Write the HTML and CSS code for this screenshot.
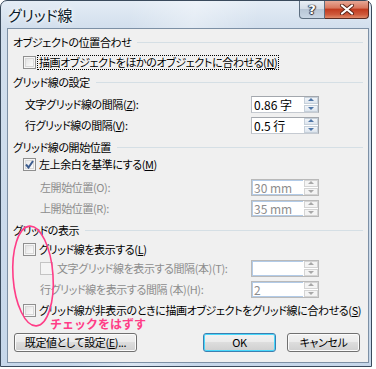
FILE: index.html
```html
<!DOCTYPE html>
<html lang="ja">
<head>
<meta charset="utf-8">
<link rel="stylesheet" href="styles.css">
</head>
<body>
<div class="window">
  <div class="titlebar">
    <span class="title">グリッド線</span>
    <div class="caption">
      <div class="cap-help">?</div>
      <div class="cap-close">
        <svg width="16" height="11" viewBox="0 0 16 11"><path d="M3 1.5 L13 9.5 M13 1.5 L3 9.5" stroke="#5a2418" stroke-width="4" stroke-linecap="round"/><path d="M3 1.5 L13 9.5 M13 1.5 L3 9.5" stroke="#fff" stroke-width="2.2" stroke-linecap="round"/></svg>
      </div>
    </div>
  </div>
  <div class="client">
    <div class="group-title g1"><span>オブジェクトの位置合わせ</span></div>
    <div class="row chk-row m3">
      <span class="chk"></span><span class="focus">描画オブジェクトをほかのオブジェクトに合わせる(<u>N</u>)</span>
    </div>

    <div class="group-title m3"><span>グリッド線の設定</span></div>
    <div class="row field m5">
      <span class="lbl">文字グリッド線の間隔(<u>Z</u>):</span>
      <div class="spin"><span class="val">0.86 字</span><span class="arrows"><i class="up"></i><i class="dn"></i></span></div>
    </div>
    <div class="row field m3">
      <span class="lbl">行グリッド線の間隔(<u>V</u>):</span>
      <div class="spin"><span class="val">0.5 行</span><span class="arrows"><i class="up"></i><i class="dn"></i></span></div>
    </div>

    <div class="group-title m5"><span>グリッド線の開始位置</span></div>
    <div class="row chk-row">
      <span class="chk checked"><svg width="9" height="9" viewBox="0 0 9 9"><path d="M1 4.5 L3.5 7.5 L8 1" fill="none" stroke="#3d5d8f" stroke-width="2"/></svg></span><span class="txt">左上余白を基準にする(<u>M</u>)</span>
    </div>
    <div class="row field m5 dis">
      <span class="lbl ind">左開始位置(O):</span>
      <div class="spin off"><span class="val">30 mm</span><span class="arrows"><i class="up"></i><i class="dn"></i></span></div>
    </div>
    <div class="row field m3 dis">
      <span class="lbl ind">上開始位置(R):</span>
      <div class="spin off"><span class="val">35 mm</span><span class="arrows"><i class="up"></i><i class="dn"></i></span></div>
    </div>

    <div class="group-title m5"><span>グリッドの表示</span></div>
    <div class="row chk-row m2">
      <span class="chk"></span><span class="txt">グリッド線を表示する(<u>L</u>)</span>
    </div>
    <div class="row field m1 dis">
      <span class="lbl sub"><span class="chk off"></span><span class="txt">文字グリッド線を表示する間隔(本)(T):</span></span>
      <div class="spin off"><span class="val"></span><span class="arrows"><i class="up"></i><i class="dn"></i></span></div>
    </div>
    <div class="row field m3 dis">
      <span class="lbl ind">行グリッド線を表示する間隔 (本)(H):</span>
      <div class="spin off"><span class="val">2</span><span class="arrows"><i class="up"></i><i class="dn"></i></span></div>
    </div>
    <div class="row chk-row short">
      <span class="chk"></span><span class="txt">グリッド線が非表示のときに描画オブジェクトをグリッド線に合わせる(<u>S</u>)</span>
    </div>
    <div class="note">チェックをはずす</div>

    <div class="buttons">
      <div class="btn wide">既定値として設定(<u>E</u>)...</div>
      <div class="btn ok">OK</div>
      <div class="btn">キャンセル</div>
    </div>
  </div>
</div>
<svg class="annot" width="376" height="369" viewBox="0 0 376 369">
  <ellipse cx="33" cy="276" rx="20" ry="50" transform="rotate(-4 33 276)" fill="none" stroke="#ff3d87" stroke-width="1.6"/>
</svg>
</body>
</html>
```

FILE: styles.css
```css
html, body {
  margin: 0;
  padding: 0;
  background: #fff;
}
body {
  width: 376px;
  height: 369px;
  position: relative;
  overflow: hidden;
  font-family: "Noto Sans CJK JP", "Liberation Sans", sans-serif;
  font-size: 11px;
  letter-spacing: -0.4px;
  font-feature-settings: "palt";
  color: #000;
}
u { text-decoration: underline; text-underline-offset: 1px; }

.window {
  width: 372px;
  height: 367px;
  box-sizing: border-box;
  border: 1px solid #3a4a5c;
  border-radius: 7px 7px 0 0;
  background:
    linear-gradient(100deg, rgba(255,255,255,0.0) 30%, rgba(255,255,255,0.35) 45%, rgba(255,255,255,0) 60%),
    linear-gradient(180deg, #e4ecf5 0, #d2dfed 27px, #c6d7ea 100%);
  display: flex;
  flex-direction: column;
  padding: 0 2px 3px 6px;
}
.titlebar {
  height: 27px;
  display: flex;
  justify-content: space-between;
  align-items: flex-start;
  flex: none;
}
.title {
  font-size: 15px;
  line-height: 15px;
  letter-spacing: 0;
  margin-top: 6px;
  margin-left: 1px;
  color: #0b1a2a;
  text-shadow: 0 0 6px #fff, 0 0 3px #fff;
}
.caption {
  display: flex;
  height: 18px;
}
.cap-help {
  width: 24px;
  height: 17px;
  border: 1px solid #5d6e80;
  border-top: none;
  border-radius: 0 0 0 4px;
  background: linear-gradient(180deg, #e9eff5 0, #d4dde7 45%, #b8c6d6 50%, #c9d6e4 100%);
  color: #fff;
  font-family: "DejaVu Sans", sans-serif;
  font-weight: bold;
  font-size: 13px;
  letter-spacing: 0;
  line-height: 17px;
  text-align: center;
  text-shadow: 0 0 1px #233, 1px 0 1px #334, -1px 0 1px #334, 0 1px 1px #334;
}
.cap-close {
  width: 43px;
  height: 17px;
  border: 1px solid #5a2a20;
  border-top: none;
  border-left: none;
  border-radius: 0 0 4px 0;
  background: linear-gradient(180deg, #e7a896 0, #d9785f 40%, #c23c20 50%, #cf5a3c 80%, #e08a6a 100%);
  display: flex;
  align-items: center;
  justify-content: center;
}

.client {
  flex: 1;
  border: 1px solid #7d90a5;
  background: #f0f0f0;
  display: flex;
  flex-direction: column;
  padding: 5px 5px 0 5px;
  color: #000;
}

.group-title {
  height: 16px;
  display: flex;
  align-items: center;
  gap: 6px;
  flex: none;
}
.group-title span { white-space: nowrap; line-height: 16px; }
.group-title::after {
  content: "";
  flex: 1;
  height: 1px;
  background: #d5dfe5;
  margin-top: 1px;
}

.row {
  height: 18px;
  display: flex;
  align-items: center;
  flex: none;
  white-space: nowrap;
}
.m1 { margin-top: 1px; }
.m2 { margin-top: 2px; }
.m3 { margin-top: 3px; }
.m5 { margin-top: 5px; }

.chk-row { padding-left: 10px; }
.chk-row.short { height: 14px; margin-top: 5px; }

.chk {
  width: 11px;
  height: 11px;
  border: 1px solid #8f8f8f;
  background: linear-gradient(135deg, #dcdcdc 0, #f4f4f4 60%, #fff 100%);
  box-shadow: inset 0 0 0 1px #f6f6f6, inset 0 0 0 2px #d8d8d8;
  flex: none;
  display: flex;
  align-items: center;
  justify-content: center;
  margin-right: 3px;
}
.chk.checked {
  background: linear-gradient(135deg, #e4e4e4 0, #f6f6f6 60%, #fff 100%);
}
.chk.off {
  border-color: #c4c4c4;
  box-shadow: inset 0 0 0 1px #f4f4f4;
  background: #f4f4f4;
  margin-right: 4px;
}
.focus {
  outline: 1px dotted #000;
  outline-offset: 0;
  line-height: 13px;
  padding: 0 1px;
  margin-left: -1px;
}
.txt { line-height: 14px; }

.field {
  display: grid;
  grid-template-columns: 238px 68px;
  align-items: center;
}
.lbl { padding-left: 12px; display: flex; align-items: center; }
.lbl.ind { padding-left: 27px; }
.lbl.sub { padding-left: 27px; }
.dis .lbl { color: #8d8d8d; }

.spin {
  height: 17px;
  box-sizing: border-box;
  border: 1px solid #a3a7ad;
  border-left-color: #b8bcc2;
  border-bottom-color: #c5cad1;
  background: #fff;
  display: flex;
  align-items: stretch;
}
.spin .val {
  flex: 1;
  padding-left: 2px;
  line-height: 15px;
  font-size: 12px;
  letter-spacing: 0;
  font-feature-settings: normal;
  white-space: pre;
  overflow: hidden;
}
.spin.off {
  border-color: #b9b9b9;
  background: #f4f7fb;
}
.spin.off .val {
  color: #8d8d8d;
  border: 1px solid #b2cbe8;
  border-right: none;
  line-height: 13px;
  padding-left: 1px;
  background: #fff;
}
.arrows {
  width: 14px;
  display: flex;
  flex-direction: column;
  gap: 1px;
  padding: 0 0 0 1px;
  background: #fff;
}
.arrows i {
  flex: 1;
  background: linear-gradient(180deg, #f2f5f9 0, #dde5ee 100%);
  border: 1px solid #c6d0da;
  position: relative;
}
.arrows i::after {
  content: "";
  position: absolute;
  left: 50%;
  top: 50%;
  margin-left: -3px;
  border-left: 3px solid transparent;
  border-right: 3px solid transparent;
}
.arrows .up::after { margin-top: -2px; border-bottom: 3px solid #4f77a8; }
.arrows .dn::after { margin-top: -1px; border-top: 3px solid #4f77a8; }
.spin.off .arrows i { background: #f4f4f4; border-color: #d4d4d4; }
.spin.off .arrows .up::after { border-bottom-color: #a8a8a8; }
.spin.off .arrows .dn::after { border-top-color: #a8a8a8; }

.note {
  height: 12px;
  line-height: 12px;
  margin-top: 1px;
  padding-left: 37px;
  color: #ff3d87;
  font-weight: bold;
  font-size: 12px;
  letter-spacing: 0;
  font-feature-settings: normal;
  flex: none;
  white-space: nowrap;
}

.buttons {
  margin-top: 3px;
  display: flex;
  padding-left: 1px;
  flex: none;
}
.btn {
  width: 73px;
  height: 19px;
  box-sizing: border-box;
  border: 1px solid #707070;
  border-radius: 3px;
  background: linear-gradient(180deg, #f2f2f2 0, #ebebeb 45%, #dddddd 50%, #cfcfcf 100%);
  box-shadow: inset 0 0 0 1px #fbfbfb;
  display: flex;
  align-items: center;
  justify-content: center;
  line-height: 15px;
  white-space: nowrap;
  margin-left: 11px;
}
.btn.wide { width: 123px; margin-left: 0; margin-right: 55px; }
.btn.ok {
  border-color: #3c7fb1;
  box-shadow: inset 0 0 0 1px #48d8fb;
}

.annot {
  position: absolute;
  left: 0;
  top: 0;
  pointer-events: none;
}
```
